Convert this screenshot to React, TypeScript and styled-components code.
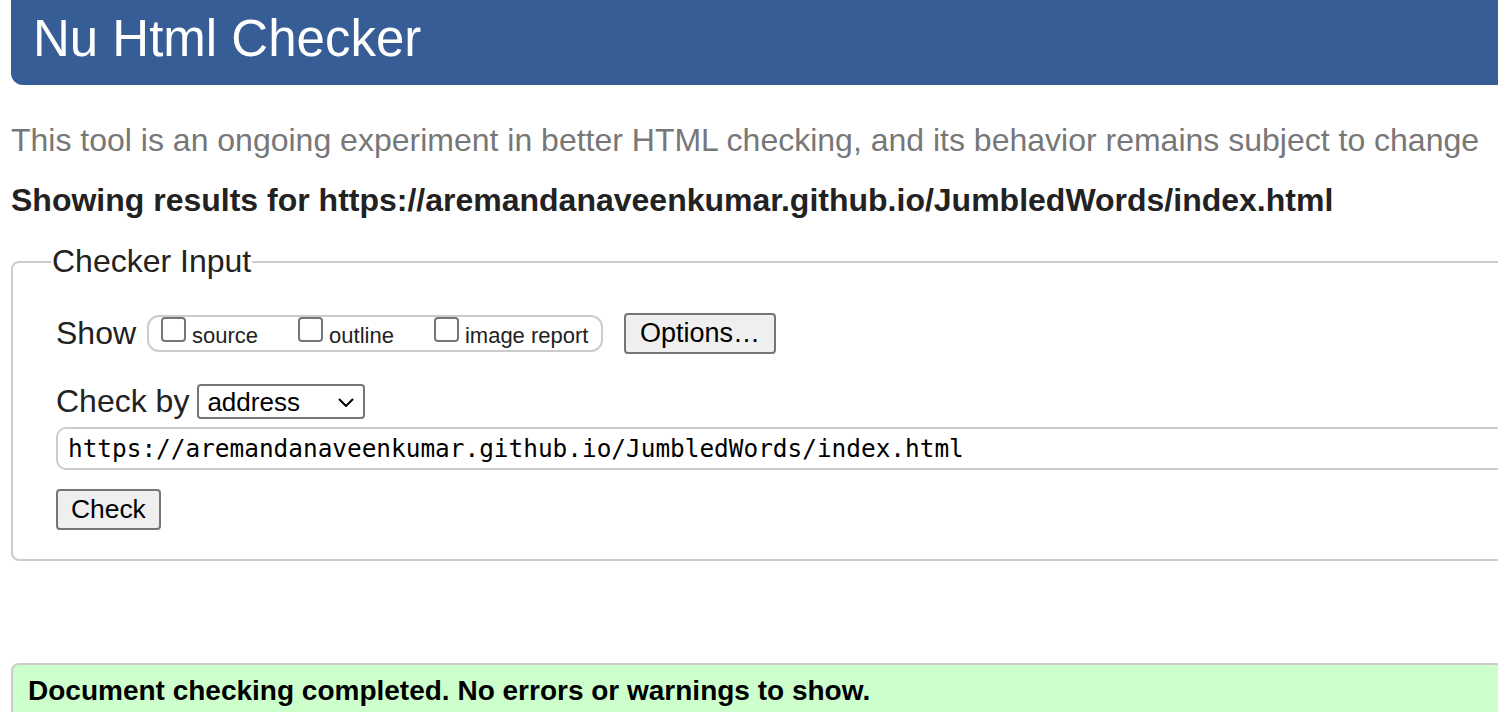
import React from 'react'
import styled, { createGlobalStyle } from 'styled-components'

const GlobalStyle = createGlobalStyle`
  html, body {
    margin: 0;
    padding: 0;
    background: #fff;
    overflow: hidden;
  }
  body {
    font-family: 'Liberation Sans', Arial, sans-serif;
    color: #222;
  }
`

const Page = styled.div`
  width: 1640px;
  padding-left: 11px;
`

const Header = styled.header`
  height: 85px;
  box-sizing: border-box;
  background: #365d95;
  border-bottom-left-radius: 12px;
  padding: 13px 0 0 22px;
`

const Title = styled.h1`
  margin: 0;
  font-size: 51px;
  font-weight: normal;
  color: #fff;
  line-height: 1;
`

const Intro = styled.p`
  margin: 37px 0 0;
  font-size: 32px;
  line-height: 37px;
  color: #777;
`

const Results = styled.h2`
  margin: 23px 0 0;
  font-size: 32px;
  line-height: 37px;
  font-weight: bold;
  color: #222;
`

const Fieldset = styled.fieldset`
  margin: 24px 0 0;
  padding: 33px 0 29px 43px;
  border: 2px solid #ccc;
  border-radius: 8px;
  min-width: 0;
`

const Legend = styled.legend`
  font-size: 32px;
  line-height: 37px;
  padding: 0 1px;
  margin-left: -5px;
  color: #222;
`

const Row = styled.div<{ $gap: number }>`
  display: flex;
  align-items: center;
  gap: ${(p) => p.$gap}px;
`

const ShowRow = styled(Row)`
  height: 41px;
`

const ByRow = styled(Row)`
  margin-top: 29px;
`

const Label = styled.span`
  font-size: 32px;
  line-height: 37px;
  color: #222;
`

const ChoiceGroup = styled.div`
  display: flex;
  align-items: flex-start;
  height: 37px;
  width: 456px;
  box-sizing: border-box;
  padding: 0 12px;
  margin-right: 10px;
  border: 2px solid #ccc;
  border-radius: 12px;
  gap: 40px;
`

const Choice = styled.label`
  display: flex;
  align-items: flex-start;
  gap: 6px;
  font-size: 22px;
  line-height: 25px;
  color: #222;
`

const ChoiceText = styled.span`
  padding-top: 6px;
`

const Box = styled.input`
  appearance: none;
  width: 25px;
  height: 25px;
  margin: 0;
  border: 2px solid #767676;
  border-radius: 4px;
  background: #fff;
  box-sizing: border-box;
`

const Button = styled.button<{ $size: number; $pad: number }>`
  font-family: 'Liberation Sans', Arial, sans-serif;
  font-size: ${(p) => p.$size}px;
  color: #000;
  background: #efefef;
  border: 2px solid #767676;
  border-radius: 4px;
  height: 41px;
  padding: 0 ${(p) => p.$pad}px;
  box-sizing: border-box;
`

const SelectWrap = styled.div`
  position: relative;
  width: 168px;
  height: 35px;
`

const Select = styled.select`
  appearance: none;
  width: 100%;
  height: 100%;
  font-family: 'Liberation Sans', Arial, sans-serif;
  font-size: 26px;
  color: #000;
  background: #fff;
  border: 2px solid #767676;
  border-radius: 4px;
  padding: 0 0 0 8px;
  box-sizing: border-box;
`

const Chevron = styled.svg`
  position: absolute;
  right: 11px;
  top: 14px;
  pointer-events: none;
`

const UrlInput = styled.input`
  display: block;
  width: 100%;
  height: 43px;
  margin-top: 7px;
  box-sizing: border-box;
  border: 2px solid #ccc;
  border-radius: 10px;
  padding: 0 10px;
  font-family: 'DejaVu Sans Mono', 'Liberation Mono', monospace;
  font-size: 24.4px;
  color: #000;
  background: #fff;
`

const CheckRow = styled.div`
  margin-top: 19px;
  display: flex;
`

const Message = styled.div`
  margin-top: 102px;
  background: #ccffcc;
  border: 2px solid #ccc;
  border-radius: 8px 0 0 0;
  padding: 10px 15px 14px;
  font-size: 28px;
  font-weight: bold;
  color: #000;
`

const url = 'https://aremandanaveenkumar.github.io/JumbledWords/index.html'
const showOptions = ['source', 'outline', 'image report']

export default function App() {
  return (
    <Page>
      <GlobalStyle />
      <Header>
        <Title>Nu Html Checker</Title>
      </Header>
      <Intro>
        This tool is an ongoing experiment in better HTML checking, and its behavior remains subject to change
      </Intro>
      <Results>Showing results for {url}</Results>
      <Fieldset>
        <Legend>Checker Input</Legend>
        <ShowRow $gap={11}>
          <Label>Show</Label>
          <ChoiceGroup>
            {showOptions.map((name) => (
              <Choice key={name}>
                <Box type="checkbox" />
                <ChoiceText>{name}</ChoiceText>
              </Choice>
            ))}
          </ChoiceGroup>
          <Button $size={27} $pad={14}>Options…</Button>
        </ShowRow>
        <ByRow $gap={8}>
          <Label>Check by</Label>
          <SelectWrap>
            <Select defaultValue="address">
              <option value="address">address</option>
              <option value="upload">file upload</option>
              <option value="input">text input</option>
            </Select>
            <Chevron width="16" height="9" viewBox="0 0 16 9">
              <path d="M1 1 L8 8 L15 1" fill="none" stroke="#000" strokeWidth="2" />
            </Chevron>
          </SelectWrap>
        </ByRow>
        <UrlInput type="url" defaultValue={url} readOnly />
        <CheckRow>
          <Button $size={26.4} $pad={13}>Check</Button>
        </CheckRow>
      </Fieldset>
      <Message>Document checking completed. No errors or warnings to show.</Message>
    </Page>
  )
}
